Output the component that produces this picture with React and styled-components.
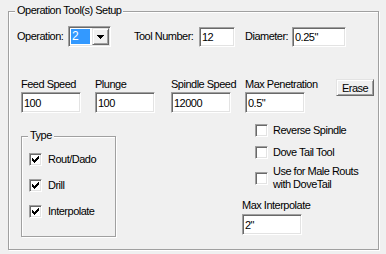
import React from 'react';
import styled, { createGlobalStyle } from 'styled-components';

const GlobalStyle = createGlobalStyle`
    body {
        margin: 0;
        background: #f0f0f0;
        font-family: "Liberation Sans", Arial, sans-serif;
        font-size: 11px;
        letter-spacing: -0.5px;
        color: #000;
    }
`

const Window = styled.div`
    width: 386px;
    height: 254px;
    padding: 11px 0 0 8px;
    box-sizing: border-box;
`

const GroupBox = styled.div`
    position: relative;
    flex: none;
    box-sizing: border-box;
    width: ${p => p.$w}px;
    height: ${p => p.$h}px;
    border: 1px solid #a0a0a0;
    box-shadow: inset 1px 1px 0 #fff, 1px 1px 0 #fff;
    padding: ${p => p.$pad};
    margin: ${p => p.$margin || 0};
`

const Caption = styled.span`
    position: absolute;
    left: 6px;
    top: -8px;
    padding: 0 2px;
    line-height: 13px;
    background: #f0f0f0;
    white-space: nowrap;
`

const Row = styled.div`
    display: flex;
    align-items: ${p => p.$align || 'center'};
    margin: ${p => p.$margin || 0};
`

const Label = styled.span`
    display: inline-block;
    flex: none;
    width: ${p => p.$w}px;
    margin-left: ${p => p.$ml || 0}px;
    line-height: 13px;
    white-space: nowrap;
`

const TextBox = styled.input`
    box-sizing: border-box;
    flex: none;
    width: ${p => p.$w}px;
    height: ${p => p.$h || 21}px;
    margin: 0;
    padding: 0 2px;
    font: inherit;
    letter-spacing: inherit;
    color: #000;
    background: #fff;
    border: 1px solid;
    border-color: #a0a0a0 #fff #fff #a0a0a0;
    box-shadow: inset 1px 1px 0 #696969, inset -1px -1px 0 #e3e3e3;
    outline: none;
`

const Field = styled.div`
    display: flex;
    flex: none;
    flex-direction: column;
    width: 60px;
    margin: ${p => p.$margin || 0};
`

const FieldLabel = styled.span`
    line-height: 13px;
    margin-bottom: ${p => p.$gap || 1}px;
    white-space: nowrap;
`

const Combo = styled.div`
    box-sizing: border-box;
    flex: none;
    width: 43px;
    height: 21px;
    display: flex;
    align-items: center;
    gap: 2px;
    padding-left: 1px;
    background: #fff;
    border: 1px solid;
    border-color: #a0a0a0 #fff #fff #a0a0a0;
    box-shadow: inset 1px 1px 0 #696969, inset -1px -1px 0 #e3e3e3;
`

const ComboValue = styled.span`
    margin-left: 1px;
    width: 19px;
    height: 15px;
    line-height: 15px;
    padding-left: 1px;
    box-sizing: border-box;
    background: #3399ff;
    color: #fff;
    font-size: 12px;
`

const ComboButton = styled.span`
    box-sizing: border-box;
    width: 17px;
    height: 17px;
    display: flex;
    align-items: center;
    justify-content: center;
    background: #f0f0f0;
    border: 1px solid;
    border-color: #e3e3e3 #696969 #696969 #e3e3e3;
    box-shadow: inset 1px 1px 0 #fff, inset -1px -1px 0 #a0a0a0;
`

const Button = styled.button`
    box-sizing: border-box;
    flex: none;
    width: 38px;
    height: 17px;
    margin: 1px 0 0 31px;
    padding: 0;
    font: inherit;
    letter-spacing: inherit;
    color: #000;
    background: #f0f0f0;
    border: 1px solid;
    border-color: #e3e3e3 #696969 #696969 #e3e3e3;
    box-shadow: inset 1px 1px 0 #fff, inset -1px -1px 0 #a0a0a0;
`

const Column = styled.div`
    display: flex;
    flex-direction: column;
    margin-left: ${p => p.$ml || 0}px;
`

const CheckRow = styled.label`
    display: flex;
    align-items: center;
    gap: ${p => p.$gap || 6}px;
    margin: ${p => p.$margin || 0};
    line-height: 13px;
    white-space: nowrap;
`

const Box = styled.span`
    box-sizing: border-box;
    flex: none;
    width: 13px;
    height: 13px;
    display: flex;
    align-items: center;
    justify-content: center;
    background: #fff;
    border: 1px solid;
    border-color: #a0a0a0 #fff #fff #a0a0a0;
    box-shadow: inset 1px 1px 0 #696969, inset -1px -1px 0 #e3e3e3;
`

const CheckBox = ({ checked, label, gap, margin }) => (
    <CheckRow $gap={gap} $margin={margin}>
        <Box>
            {checked && (
                <svg width="7" height="7" viewBox="0 0 7 7" shapeRendering="crispEdges">
                    <path d="M6 0h1v3h-1v1h-1v1h-1v1h-1v1h-1v-1h-1v-1h-1v-3h1v1h1v1h1v-1h1v-1h1z" fill="#000" />
                </svg>
            )}
        </Box>
        <span>{label}</span>
    </CheckRow>
)

const App = () => {
    return (
        <Window>
            <GlobalStyle />
            <GroupBox $w={371} $h={239} $pad="14px 0 0 8px">
                <Caption>Operation Tool(s) Setup</Caption>

                <Row>
                    <Label $w={51}>Operation:</Label>
                    <Combo>
                        <ComboValue>2</ComboValue>
                        <ComboButton>
                            <svg width="7" height="4" viewBox="0 0 7 4" shapeRendering="crispEdges">
                                <path d="M0 0h7v1h-1v1h-1v1h-1v1h-1v-1h-1v-1h-1v-1h-1z" fill="#000" />
                            </svg>
                        </ComboButton>
                    </Combo>
                    <Label $w={65} $ml={23}>Tool Number:</Label>
                    <TextBox $w={36} $h={20} readOnly value="12" />
                    <Label $w={47} $ml={10}>Diameter:</Label>
                    <TextBox $w={54} $h={20} readOnly value={'0.25"'} />
                </Row>

                <Row $align="flex-start" $margin="31px 0 0 4px">
                    <Field>
                        <FieldLabel>Feed Speed</FieldLabel>
                        <TextBox $w={60} readOnly value="100" />
                    </Field>
                    <Field $margin="0 0 0 14px">
                        <FieldLabel>Plunge</FieldLabel>
                        <TextBox $w={60} readOnly value="100" />
                    </Field>
                    <Field $margin="0 0 0 16px">
                        <FieldLabel>Spindle Speed</FieldLabel>
                        <TextBox $w={60} readOnly value="12000" />
                    </Field>
                    <Field $margin="0 0 0 14px">
                        <FieldLabel>Max Penetration</FieldLabel>
                        <TextBox $w={60} readOnly value={'0.5"'} />
                    </Field>
                    <Button>Erase</Button>
                </Row>

                <Row $align="flex-start" $margin="11px 0 0 4px">
                    <GroupBox $w={95} $h={101} $pad="16px 0 0 7px" $margin="12px 0 0 0">
                        <Caption>Type</Caption>
                        <Column>
                            <CheckBox checked label="Rout/Dado" />
                            <CheckBox checked label="Drill" margin="13px 0 0 0" />
                            <CheckBox checked label="Interpolate" margin="13px 0 0 0" />
                        </Column>
                    </GroupBox>

                    <Column $ml={126}>
                        <CheckBox label="Reverse Spindle" gap={5} margin="0 0 0 13px" />
                        <CheckBox label="Dove Tail Tool" gap={5} margin="9px 0 0 13px" />
                        <CheckBox label={<>Use for Male Routs<br />with DoveTail</>} gap={5} margin="6px 0 0 13px" />
                        <Field $margin="8px 0 0 0">
                            <FieldLabel $gap={2}>Max Interpolate</FieldLabel>
                            <TextBox $w={60} readOnly value={'2"'} />
                        </Field>
                    </Column>
                </Row>
            </GroupBox>
        </Window>
    );
};

export default App;
